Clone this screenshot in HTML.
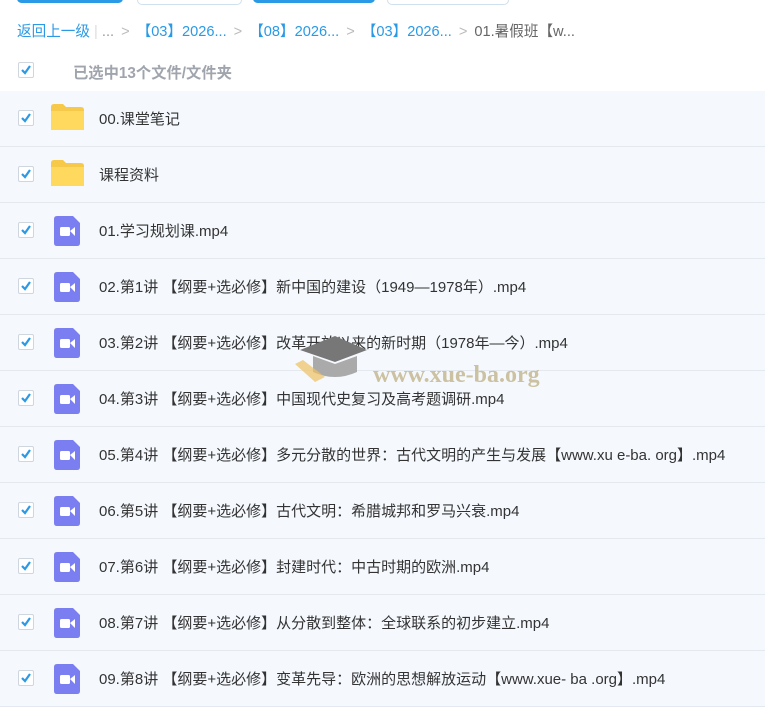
<!DOCTYPE html>
<html><head><meta charset="utf-8"><style>
body{margin:0;width:765px;height:710px;background:#fff;font-family:"Liberation Sans","Noto Sans CJK SC",sans-serif;overflow:hidden;position:relative}
.btn{position:absolute;top:-6px;height:9px;border-radius:5px}
.crumb{position:absolute;top:20px;left:17px;font-size:14.6px;color:#999;white-space:nowrap}
.crumb a{color:#2a9ae6}
.crumb .s{color:#bbb;margin:0 7px}
.cb{position:absolute;left:18px;width:16px;height:16px;border:1px solid #cfd6dd;background:#fff;box-sizing:border-box;border-radius:2px}
.cb svg{position:absolute;left:1px;top:1px}
.hdr{position:absolute;top:61px;left:73px;font-size:15.3px;color:#a0a5ad;font-weight:bold}
.row{position:absolute;left:0;width:765px;height:55px;background:#f5f9fe;border-bottom:1px solid #e3e9ef}
.row .cb{top:19px}
.row .t{position:absolute;left:99px;top:17px;font-size:15px;color:#333;white-space:nowrap}
.fold{position:absolute;left:51px;top:13px;width:33px;height:26px}
.vid{position:absolute;left:54px;top:13px;width:26px;height:30px}
.wm{position:absolute;left:373px;top:362px;font-family:"Liberation Serif",serif;font-weight:bold;font-size:24px;color:rgba(190,175,130,.75)}
</style></head><body>
<div class="btn" style="left:17px;width:106px;background:#2a9ae6"></div>
<div class="btn" style="left:137px;width:103px;border:1px solid #cfe0ee"></div>
<div class="btn" style="left:253px;width:122px;background:#2a9ae6"></div>
<div class="btn" style="left:387px;width:120px;border:1px solid #cfe0ee"></div>
<div class="crumb"><a>返回上一级</a> <span style="color:#ddd">|</span> ...<span class="s">&gt;</span><a>【03】2026...</a><span class="s">&gt;</span><a>【08】2026...</a><span class="s">&gt;</span><a>【03】2026...</a><span class="s">&gt;</span><span style="color:#666">01.暑假班【w...</span></div>
<div class="cb" style="top:62px"><svg width="12" height="12"><path d="M2 6 L5 9 L10 2" stroke="#2a9ae6" stroke-width="2.2" fill="none"/></svg></div>
<div class="hdr">已选中13个文件/文件夹</div>
<div id="rows"></div>
<div class="wm">www.xue-ba.org</div>
<svg style="position:absolute;left:295px;top:322px" width="75" height="65"><path d="M5 28 L40 14 L72 28 L40 40 Z" fill="#777"/><path d="M18 34 L18 50 Q40 60 62 50 L62 34 L40 42 Z" fill="#aaa"/><path d="M0 42 L20 60 L30 55 L8 38Z" fill="#f0c060" opacity=".7"/></svg>
<script>
var names=["00.课堂笔记","课程资料","01.学习规划课.mp4","02.第1讲 【纲要+选必修】新中国的建设（1949—1978年）.mp4","03.第2讲 【纲要+选必修】改革开放以来的新时期（1978年—今）.mp4","04.第3讲 【纲要+选必修】中国现代史复习及高考题调研.mp4","05.第4讲 【纲要+选必修】多元分散的世界：古代文明的产生与发展【www.xu e-ba. org】.mp4","06.第5讲 【纲要+选必修】古代文明：希腊城邦和罗马兴衰.mp4","07.第6讲 【纲要+选必修】封建时代：中古时期的欧洲.mp4","08.第7讲 【纲要+选必修】从分散到整体：全球联系的初步建立.mp4","09.第8讲 【纲要+选必修】变革先导：欧洲的思想解放运动【www.xue- ba .org】.mp4"];
var h="";
names.forEach(function(n,i){
var icon=i<2?'<svg class="fold" viewBox="0 0 33 26"><path d="M0 3 Q0 0 3 0 L12 0 L15 3 L30 3 Q33 3 33 6 L33 26 L0 26Z" fill="#f6c94a"/><path d="M0 7 L33 7 L33 26 L0 26Z" fill="#fed95e"/></svg>'
:'<svg class="vid" viewBox="0 0 26 30"><path d="M3 0 L19 0 L26 7 L26 27 Q26 30 23 30 L3 30 Q0 30 0 27 L0 3 Q0 0 3 0Z" fill="#7b7ef0"/><rect x="6" y="11" width="10" height="9" rx="1.5" fill="#fff"/><path d="M16 15 L21 11 L21 20Z" fill="#fff"/></svg>';
h+='<div class="row" style="top:'+(91+i*56)+'px"><div class="cb"><svg width="12" height="12"><path d="M2 6 L5 9 L10 2" stroke="#2a9ae6" stroke-width="2.2" fill="none"/></svg></div>'+icon+'<div class="t">'+n+'</div></div>';
});
document.getElementById("rows").innerHTML=h;
</script>
</body></html>
